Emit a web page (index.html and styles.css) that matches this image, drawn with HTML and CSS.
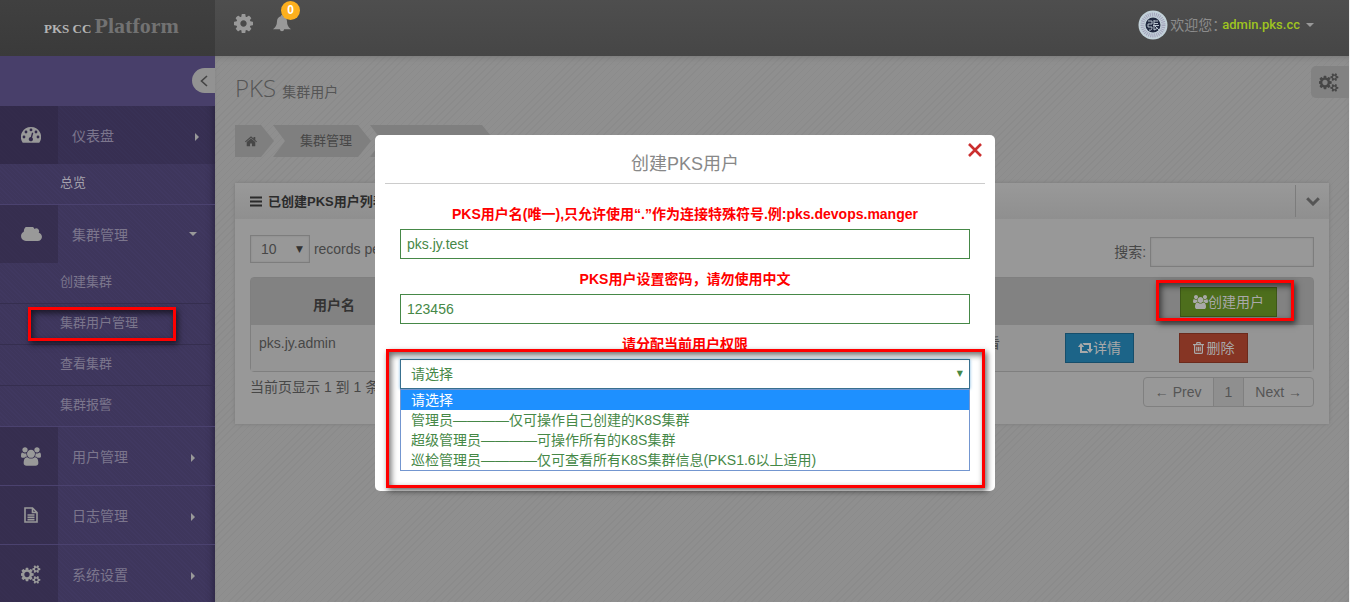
FILE: index.html
```html
<!DOCTYPE html>
<html lang="zh-CN">
<head>
<meta charset="utf-8">
<title>PKS CC Platform</title>
<link rel="stylesheet" href="styles.css">
</head>
<body>
<svg class="defs" aria-hidden="true">
  <symbol id="cog" viewBox="128 128 1536 1536"><path d="M1152 896q0-106-75-181t-181-75-181 75-75 181 75 181 181 75 181-75 75-181zm512-109v222q0 12-8 23t-20 13l-185 28q-19 54-39 91 35 50 107 138 10 12 10 25t-9 23q-27 37-99 108t-94 71q-12 0-26-9l-138-108q-44 23-91 38-16 136-29 186-7 28-36 28h-222q-14 0-24.5-8.500t-11.500-21.500l-28-184q-49-16-90-37l-141 107q-10 9-25 9-14 0-25-11-126-114-165-168-7-10-7-23 0-12 8-23 15-21 51-66.500t54-70.500q-27-50-41-99l-183-27q-13-2-21-12.500t-8-23.500v-222q0-12 8-23t19-13l186-28q14-46 39-92-40-57-107-138-10-12-10-24 0-10 9-23 26-36 98.500-107.500t94.500-71.500q13 0 26 10l138 107q44-23 91-38 16-136 29-186 7-28 36-28h222q14 0 24.500 8.500t11.500 21.500l28 184q49 16 90 37l142-107q9-9 24-9 13 0 25 10 129 119 165 170 7 8 7 22 0 12-8 23-15 21-51 66.500t-54 70.500q26 50 41 98l183 28q13 2 21 12.500t8 23.500z"/></symbol>
  <symbol id="cogs" viewBox="0 0 1920 1792"><path d="M832 896q0-106-75-181t-181-75-181 75-75 181 75 181 181 75 181-75 75-181zm768 512q0-52-38-90t-90-38-90 38-38 90q0 53 37.500 90.500t90.500 37.500 90.500-37.500 37.500-90.500zm0-1024q0-52-38-90t-90-38-90 38-38 90q0 53 37.500 90.500t90.500 37.500 90.500-37.500 37.500-90.500zm-384 421v185q0 10-7 19.500t-16 10.500l-155 24q-11 35-32 76 34 48 90 115 7 11 7 20 0 12-7 19-23 30-82.500 89.500t-78.500 59.500q-11 0-21-7l-115-90q-37 19-77 31-11 108-23 155-7 24-30 24h-186q-11 0-20-7.500t-10-17.500l-23-153q-34-10-75-31l-118 89q-7 7-20 7-11 0-21-8-144-133-144-160 0-9 7-19 10-14 41-53t47-61q-23-44-35-82l-152-24q-10-1-17-9.500t-7-19.500v-185q0-10 7-19.500t16-10.500l155-24q11-35 32-76-34-48-90-115-7-11-7-20 0-12 7-20 22-30 82-89t79-59q11 0 21 7l115 90q34-18 77-32 11-108 23-154 7-24 30-24h186q11 0 20 7.500t10 17.500l23 153q34 10 75 31l118-89q8-7 20-7 11 0 21 8 144 133 144 160 0 8-7 19-12 16-42 54t-45 60q23 48 34 82l152 23q10 2 17 10.500t7 19.500zm640 533v140q0 16-149 31-12 27-30 52 51 113 51 138 0 4-4 7-122 71-124 71-8 0-46-47t-52-68q-20 2-30 2t-30-2q-14 21-52 68t-46 47q-2 0-124-71-4-3-4-7 0-25 51-138-18-25-30-52-149-15-149-31v-140q0-16 149-31 13-29 30-52-51-113-51-138 0-4 4-7 4-2 35-20t59-34 30-16q8 0 46 46.500t52 67.500q20-2 30-2t30 2q51-71 92-112l6-2q4 0 124 70 4 3 4 7 0 25-51 138 17 23 30 52 149 15 149 31zm0-1024v140q0 16-149 31-12 27-30 52 51 113 51 138 0 4-4 7-122 71-124 71-8 0-46-47t-52-68q-20 2-30 2t-30-2q-14 21-52 68t-46 47q-2 0-124-71-4-3-4-7 0-25 51-138-18-25-30-52-149-15-149-31v-140q0-16 149-31 13-29 30-52-51-113-51-138 0-4 4-7 4-2 35-20t59-34 30-16q8 0 46 46.500t52 67.500q20-2 30-2t30 2q51-71 92-112l6-2q4 0 124 70 4 3 4 7 0 25-51 138 17 23 30 52 149 15 149 31z"/></symbol>
  <symbol id="users" viewBox="0 0 1920 1792"><path d="M593 896q-162 5-265 128h-134q-82 0-138-40.500t-56-118.500q0-353 124-353 6 0 43.500 21t97.500 42.500 119 21.500q67 0 133-23-5 37-5 66 0 139 81 256zm1071 637q0 120-73 189.500t-194 69.500h-874q-121 0-194-69.500t-73-189.500q0-53 3.500-103.500t14-109 26.500-108.500 43-97.500 62-81 85.500-53.500 111.500-20q10 0 43 21.500t73 48 107 48 135 21.500 135-21.500 107-48 73-48 43-21.500q61 0 111.500 20t85.500 53.500 62 81 43 97.500 26.500 108.500 14 109 3.500 103.500zm-1024-1277q0 106-75 181t-181 75-181-75-75-181 75-181 181-75 181 75 75 181zm704 384q0 159-112.500 271.500t-271.500 112.500-271.500-112.500-112.500-271.500 112.500-271.500 271.500-112.500 271.500 112.500 112.500 271.500zm576 225q0 78-56 118.500t-138 40.500h-134q-103-123-265-128 81-117 81-256 0-29-5-66 66 23 133 23 59 0 119-21.500t97.500-42.500 43.500-21q124 0 124 353zm-128-609q0 106-75 181t-181 75-181-75-75-181 75-181 181-75 181 75 75 181z"/></symbol>
  <symbol id="cloud" viewBox="0 256 1920 1280"><path d="M1920 1152q0 159-112.500 271.500t-271.500 112.500h-1088q-185 0-316.500-131.500t-131.500-316.500q0-130 70-240t188-165q-2-30-2-43 0-212 150-362t362-150q156 0 283.500 87t185.500 226q71-62 166-62 106 0 181 75t75 181q0 76-41 138 130 31 213.500 135.500t83.500 238.500z"/></symbol>
  <symbol id="bell" viewBox="0 0 20 20"><path d="M10 1q1.200 0 1.200 1.300C14 3 15.300 5 15.300 8c0 4 1.500 6 4.200 8H12.200a2.200 2.200 0 0 1-4.400 0H.5C3.200 14 4.700 12 4.700 8c0-3 1.300-5 4.100-5.700Q8.800 1 10 1z"/></symbol>
  <symbol id="gauge" viewBox="0 0 20 16"><path fill-rule="evenodd" d="M10 0a10 10 0 0 1 8.600 15.200q-.3.600-1 .600H2.400q-.7 0-1-.6A10 10 0 0 1 10 0zM3 8.600a1.400 1.400 0 1 0 0 2.800 1.400 1.400 0 0 0 0-2.800zM5 3.600a1.400 1.400 0 1 0 0 2.800 1.400 1.400 0 0 0 0-2.800zM10 1.500a1.400 1.400 0 1 0 0 2.800 1.400 1.400 0 0 0 0-2.800zM15 3.600a1.400 1.400 0 1 0 0 2.800 1.400 1.400 0 0 0 0-2.800zM17 8.600a1.400 1.400 0 1 0 0 2.800 1.400 1.400 0 0 0 0-2.800zM11 5.500l-1.200 4.600a2.100 2.100 0 1 0 1.300.4l1.200-4.600z"/></symbol>
  <symbol id="file" viewBox="0 0 14 16"><path fill="none" stroke="currentColor" stroke-width="1.600" d="M1 1h7.500L13 5.500V15H1zM8.500 1v4.500H13M3.500 8h7M3.500 10.300h7M3.500 12.600h7"/></symbol>
  <symbol id="home" viewBox="0 0 14 12"><path d="M7 2.500l5 4.200V11q0 .6-.6.600H8.200V8.200H5.800v3.400H2.600Q2 11.600 2 11V6.700zM7 0l3 2.500V.8h2v3.400l2 1.700-.8.900L7 1.700.8 6.800 0 5.900z"/></symbol>
  <symbol id="bars" viewBox="0 0 12 11"><path d="M0 .5h12v2H0zM0 4.500h12v2H0zM0 8.500h12v2H0z"/></symbol>
  <symbol id="retweet" viewBox="0 0 15 10"><path d="M3 0l3.200 4H4v4h5l1.500 2H2V4H0zM4.500 0H13v6h2l-3 4-3.200-4H11V2H6z"/></symbol>
  <symbol id="trash" viewBox="0 0 11 12"><path fill="none" stroke="currentColor" stroke-width="1.200" d="M0 2.600h11M3.500 2.500L4 .7h3l.5 1.800M1.600 3v7.600q0 .8.800.8h6.200q.8 0 .8-.8V3M3.800 4.800v4.500M5.500 4.800v4.500M7.200 4.800v4.500"/></symbol>
  <symbol id="down" viewBox="0 0 14 9"><path fill="none" stroke="currentColor" stroke-width="3" d="M1.200 1.300L7 7l5.800-5.700"/></symbol>
  <symbol id="left" viewBox="0 0 8 12"><path fill="none" stroke="currentColor" stroke-width="1.600" d="M7 1L1.500 6 7 11"/></symbol>
  <symbol id="times" viewBox="0 0 14 14"><path fill="none" stroke="currentColor" stroke-width="2.600" d="M1 1l12 12M13 1L1 13"/></symbol>
</svg>

<div class="shell">
  <header class="topbar">
    <a class="logo" href="#"><span class="logo-small">PKS CC</span> <span class="logo-big">Platform</span></a>
    <div class="tools">
      <button class="tool" aria-label="设置"><svg class="i19"><use href="#cog"/></svg></button>
      <button class="tool" aria-label="通知"><svg class="i20"><use href="#bell"/></svg><span class="badge">0</span></button>
    </div>
    <a class="account" href="#">
      <svg class="avatar" viewBox="0 0 30 30"><circle cx="15" cy="15" r="14.500" fill="#c3d2da"/><circle cx="15" cy="15" r="10.500" fill="none" stroke="#a3a3bb" stroke-width="4" stroke-dasharray="1 1"/><circle cx="15" cy="15" r="7.500" fill="#20283f"/><path d="M10 11h4v3h-4v3h4q0 4-3 3M16 10v10l4-2M16 11h4M16 13.500h4M15 15.500h6M17 16l4 4" fill="none" stroke="#b8c3ce"/></svg>
      <span class="welcome">欢迎您：</span><span class="who">admin.pks.cc</span><i class="caret"></i>
    </a>
  </header>

  <nav class="side">
    <div class="side-top"><button class="collapse" aria-label="收起"><svg><use href="#left"/></svg></button></div>
    <a class="item dark" href="#"><span class="ico"><svg class="gauge"><use href="#gauge"/></svg></span><span class="txt">仪表盘</span><i class="tri near"></i></a>
    <a class="sub current" href="#">总览</a>
    <a class="item open" href="#"><span class="ico"><svg class="cloud"><use href="#cloud"/></svg></span><span class="txt">集群管理</span><i class="caret"></i></a>
    <a class="sub" href="#">创建集群</a>
    <a class="sub" href="#">集群用户管理<span class="mark mark-side"></span></a>
    <a class="sub" href="#">查看集群</a>
    <a class="sub last" href="#">集群报警</a>
    <a class="item line" href="#"><span class="ico"><svg class="i20"><use href="#users"/></svg></span><span class="txt">用户管理</span><i class="tri"></i></a>
    <a class="item line" href="#"><span class="ico"><svg class="file"><use href="#file"/></svg></span><span class="txt">日志管理</span><i class="tri"></i></a>
    <a class="item line" href="#"><span class="ico"><svg class="i20"><use href="#cogs"/></svg></span><span class="txt">系统设置</span><i class="tri"></i></a>
  </nav>

  <main class="main">
    <button class="settings" aria-label="主题设置"><svg class="i20"><use href="#cogs"/></svg></button>
    <h1 class="title">PKS <small>集群用户</small></h1>
    <ul class="crumbs">
      <li class="crumb first"><a href="#" aria-label="首页"><svg><use href="#home"/></svg></a></li>
      <li class="crumb"><a href="#">集群管理</a></li>
      <li class="crumb tail"></li>
    </ul>
    <section class="panel">
      <div class="panel-head"><svg><use href="#bars"/></svg><h2>已创建PKS用户列表</h2><button class="fold" aria-label="折叠"><svg><use href="#down"/></svg></button></div>
      <div class="panel-body">
        <div class="filters">
          <label class="len"><select><option>10</option></select> records per page</label>
          <label class="search">搜索: <input type="text"></label>
        </div>
        <div class="table-box">
          <table>
            <colgroup><col class="c1"><col><col class="c3"><col class="c4"><col class="c5"></colgroup>
            <thead><tr><th>用户名</th><th></th><th></th><th></th><th class="act"><button class="btn green"><svg class="b-users"><use href="#users"/></svg>创建用户</button><span class="mark mark-create"></span></th></tr></thead>
            <tbody><tr><td>pks.jy.admin</td><td></td><td>查看</td><td><button class="btn blue"><svg class="b-rt"><use href="#retweet"/></svg>详情</button></td><td><button class="btn red"><svg class="b-trash"><use href="#trash"/></svg>删除</button></td></tr></tbody>
          </table>
        </div>
        <div class="foot">
          <span>当前页显示 1 到 1 条数据</span>
          <div class="pages"><a href="#">← Prev</a><a class="on" href="#">1</a><a href="#">Next →</a></div>
        </div>
      </div>
    </section>
  </main>
</div>

<div class="overlay">
  <form class="modal" role="dialog" aria-labelledby="dlg">
    <button type="button" class="close" aria-label="关闭"><svg><use href="#times"/></svg></button>
    <h3 id="dlg">创建PKS用户</h3>
    <div class="fields">
      <label for="name">PKS用户名(唯一),只允许使用“.”作为连接特殊符号.例:pks.devops.manger</label>
      <input id="name" type="text" value="pks.jy.test">
      <label for="pwd">PKS用户设置密码，请勿使用中文</label>
      <input id="pwd" type="text" value="123456">
      <label for="role">请分配当前用户权限</label>
      <div class="role">
        <select id="role"><option>请选择</option></select>
        <ul class="options" role="listbox">
          <li class="sel" role="option">请选择</li>
          <li role="option">管理员————仅可操作自己创建的K8S集群</li>
          <li role="option">超级管理员————可操作所有的K8S集群</li>
          <li role="option">巡检管理员————仅可查看所有K8S集群信息(PKS1.6以上适用)</li>
        </ul>
        <span class="mark mark-role"></span>
      </div>
    </div>
  </form>
</div>
</body>
</html>
```
FILE: styles.css
```css
* { box-sizing: border-box; }
body {
  margin: 0;
  height: 100vh;
  overflow: hidden;
  font: 14px/20px "Liberation Sans", "Noto Sans CJK SC", sans-serif;
  color: #474747;
}
a { color: inherit; text-decoration: none; }
button, input, select { font: inherit; color: inherit; }
button { border: 0; padding: 0; background: none; }
ul, h1, h2, h3 { margin: 0; padding: 0; list-style: none; font-weight: normal; }
svg { display: block; flex: none; fill: currentColor; }
.defs { position: absolute; width: 0; height: 0; }
.i19 { width: 19px; height: 19px; }
.i20 { width: 20px; height: 19px; }

.shell {
  display: grid;
  grid-template: 56px 1fr / 215px 1fr;
  min-height: 100vh;
  border-right: 1px solid #eee;
}

/* top bar */
.topbar {
  grid-column: 1 / 3;
  display: flex;
  align-items: center;
  background: linear-gradient(#4e4e4e, #464646);
  color: #8c8c8c;
}
.logo {
  width: 215px;
  height: 56px;
  padding: 0 0 4px 44px;
  background: linear-gradient(#404040, #3a3a3a);
  font: bold 13px/52px "Liberation Serif", serif;
  color: #b4b4b4;
  white-space: nowrap;
}
.logo-big { font-size: 22px; color: #727272; }
.tools { display: flex; gap: 19px; padding: 0 0 10px 19px; color: #999; }
.tool { position: relative; }
.badge {
  position: absolute;
  left: 9px;
  top: -13px;
  width: 19px;
  height: 19px;
  border-radius: 50%;
  background: #fdb01e;
  color: #fff;
  font: bold 12px/19px "Liberation Sans", sans-serif;
}
.account {
  display: flex;
  align-items: center;
  margin-left: auto;
  padding: 0 35px 6px 0;
}
.avatar { width: 30px; height: 30px; margin-right: 2px; }
.who { margin-right: 6px; color: #9fc420; font: 500 13px/20px Roboto, sans-serif; }
.welcome { width: 52px; white-space: nowrap; }
.caret {
  border: 4px solid transparent;
  border-top-color: #999;
  border-bottom: 0;
}

/* side menu */
.side {
  background: repeating-linear-gradient(45deg, #403860 0 1px, #3e365c 1px 3px);
  box-shadow: inset -6px 0 6px -4px #2b2542;
  color: #7c768d;
  overflow: hidden;
}
.side-top {
  display: flex;
  justify-content: flex-end;
  height: 50px;
  padding-top: 12px;
  background: #483f6a;
}
.collapse {
  display: flex;
  align-items: center;
  width: 23px;
  height: 25px;
  padding-left: 8px;
  border-radius: 13px 0 0 13px;
  background: #929292;
  color: #444;
}
.collapse svg { width: 8px; height: 12px; }
.item { display: flex; align-items: center; height: 58px; }
.item.line { height: 59px; border-bottom: 1px solid #4b426f; }
.item.dark { background: rgba(40, 34, 60, .3); }
.ico {
  display: flex;
  align-items: center;
  justify-content: center;
  width: 58px;
  height: 100%;
  padding-left: 4px;
  background: rgba(45, 38, 66, .5);
  color: #999;
}
.gauge { width: 20px; height: 16px; }
.cloud { width: 21px; height: 14px; }
.file { width: 14px; height: 16px; }
.txt { flex: 1; padding: 2px 0 0 14px; }
.tri {
  margin: 3px 20px 0 0;
  border: 4px solid transparent;
  border-left-color: #999;
  border-right: 0;
}
.tri.near { margin-right: 16px; }
.item .caret { margin-right: 18px; }
.sub {
  position: relative;
  display: block;
  height: 41px;
  padding: 9px 0 0 60px;
  border-bottom: 1px solid #352e4f;
  font-size: 13px;
}
.sub.current { color: #a5a2ad; border-color: #4b426f; }
.sub.last { border-color: #4b426f; }

/* highlight frames */
.mark {
  position: absolute;
  border: 3px solid #f00;
  box-shadow: 2px 3px 6px rgba(0, 0, 0, .6), inset 2px 3px 6px rgba(0, 0, 0, .6);
  pointer-events: none;
}
.mark-side { left: 28px; top: 3px; width: 148px; height: 34px; }
.mark-create { left: -15px; top: 2px; width: 138px; height: 41px; }
.mark-role { left: -14px; right: -15px; top: -10px; bottom: -17px; }

/* content */
.main {
  position: relative;
  min-width: 0;
  padding: 17px 20px 0;
  background: repeating-linear-gradient(135deg, #8b8b8b 0 1px, #8f8f8f 1px 5px);
  box-shadow: inset 0 4px 6px -3px #777;
}
.settings {
  position: absolute;
  top: 10px;
  right: 0;
  width: 38px;
  height: 32px;
  padding-left: 8px;
  border-radius: 5px 0 0 5px;
  background: #828282;
}
.title { font: 300 24px/30px "Open Sans", sans-serif; color: #555; }
.title small { font: 14px "Liberation Sans", "Noto Sans CJK SC", sans-serif; }
.crumbs { display: flex; margin-top: 22px; }
.crumb {
  display: flex;
  align-items: center;
  justify-content: center;
  width: 98px;
  height: 32px;
  margin-right: -1px;
  padding-left: 8px;
  background: #7f7f7f;
  clip-path: polygon(0 0, calc(100% - 13px) 0, 100% 50%, calc(100% - 13px) 100%, 0 100%, 12px 50%);
  font-size: 13px;
}
.crumb.first {
  width: 39px;
  padding: 0 7px 0 0;
  clip-path: polygon(0 0, 26px 0, 100% 50%, 26px 100%, 0 100%);
}
.crumb.tail { width: 125px; }
.crumb svg { width: 12px; height: 11px; }
.panel {
  margin-top: 26px;
  background: #989898;
  box-shadow: 0 0 3px #7a7a7a;
}
.panel-head {
  display: flex;
  align-items: center;
  height: 36px;
  padding-left: 15px;
  background: linear-gradient(#999, #8f8f8f);
  color: #2b2b2b;
}
.panel-head svg { width: 12px; height: 11px; }
.panel-head h2 { margin-left: 6px; padding-top: 2px; font-size: 13px; font-weight: bold; }
.fold {
  display: flex;
  align-items: center;
  justify-content: center;
  width: 34px;
  height: 32px;
  margin-left: auto;
  border-left: 1px solid #7c7c7c;
  color: #555;
}
.panel-head .fold svg { width: 14px; height: 9px; }
.panel-body { padding: 16px 15px 17px; }
.filters { display: flex; justify-content: space-between; align-items: flex-start; height: 42px; }
.len { position: relative; white-space: nowrap; }
.len select {
  width: 60px;
  height: 28px;
  padding: 0 0 0 10px;
  border: 1px solid #7d7d7d;
  appearance: none;
  background: #989898;
  box-shadow: inset 0 0 2px #858585;
}
.len::after {
  content: "▼";
  position: absolute;
  left: 46px;
  top: 4px;
  font: 9px/20px "DejaVu Sans", sans-serif;
  color: #333;
}
.search { padding-top: 2px; }
.search input {
  width: 164px;
  height: 30px;
  border: 1px solid #7d7d7d;
  background: #989898;
  box-shadow: inset 0 0 2px #858585;
}
.table-box { border: 1px solid #7f7f7f; border-radius: 4px; }
table { width: 100%; table-layout: fixed; border-collapse: collapse; }
.c1 { width: 166px; }
.c3 { width: 93px; }
.c4 { width: 114px; }
.c5 { width: 142px; }
thead { background: #828282; color: #333; }
th { height: 47px; padding: 7px 8px 0; }
td { height: 46px; padding: 0 8px; white-space: nowrap; background: #959595; }
td:first-child, td:nth-child(3) { padding-bottom: 10px; }
.act { position: relative; padding: 0 9px; text-align: left; font-weight: normal; }
.btn {
  display: flex;
  align-items: center;
  justify-content: center;
  width: 69px;
  height: 30px;
  border: 1px solid;
  color: #a9a9a9;
}
.btn.green { width: 97px; background: #4d6e1c; border-color: #3d5817; }
.btn.blue { background: #1c6488; border-color: #164e6b; }
.btn.red { gap: 3px; background: #863524; border-color: #6c2a1c; }
.b-users { width: 15px; height: 14px; }
.b-rt { width: 15px; height: 10px; }
.b-trash { width: 11px; height: 12px; }
.foot { display: flex; justify-content: space-between; padding-top: 5px; }
.pages {
  display: flex;
  border: 1px solid #808080;
  border-radius: 4px;
  line-height: 28px;
  color: #555;
}
.pages a { padding: 0 11px; }
.pages .on { border: solid #808080; border-width: 0 1px; background: #8f8f8f; }

/* dialog */
.overlay {
  position: fixed;
  inset: 0;
  display: flex;
  justify-content: center;
  align-items: flex-start;
  padding: 135px 0 0 20px;
}
.modal {
  position: relative;
  width: 620px;
  padding: 10px 10px 20px;
  border-radius: 5px;
  background: #fff;
  color: #468847;
  text-align: center;
}
.close { position: absolute; top: 8px; right: 13px; color: #cb2f2f; }
.close svg { width: 14px; height: 14px; }
.modal h3 {
  padding-top: 1px;
  border-bottom: 1px solid #ccc;
  font-size: 18px;
  line-height: 37px;
  color: #888;
}
.fields { padding: 15px 15px 0; text-align: left; }
.fields label {
  display: block;
  font-weight: bold;
  line-height: 30px;
  text-align: center;
  color: #f00;
}
.fields input, .fields select {
  display: block;
  width: 100%;
  height: 30px;
  padding: 0 6px;
  border: 1px solid #468847;
  background: #fff;
}
.fields input { margin-bottom: 5px; }
.role { position: relative; }
.role::after {
  content: "▼";
  position: absolute;
  right: 7px;
  top: 5px;
  font: 8px/20px "DejaVu Sans", sans-serif;
}
.fields select {
  appearance: none;
  padding-left: 10px;
  border-color: #38708f;
  box-shadow: 0 0 3px #7db6e0;
}
.options { border: 1px solid #7396d0; }
.options li { padding-left: 10px; white-space: nowrap; }
.options .sel { background: #1e90ff; color: #fff; }
```
